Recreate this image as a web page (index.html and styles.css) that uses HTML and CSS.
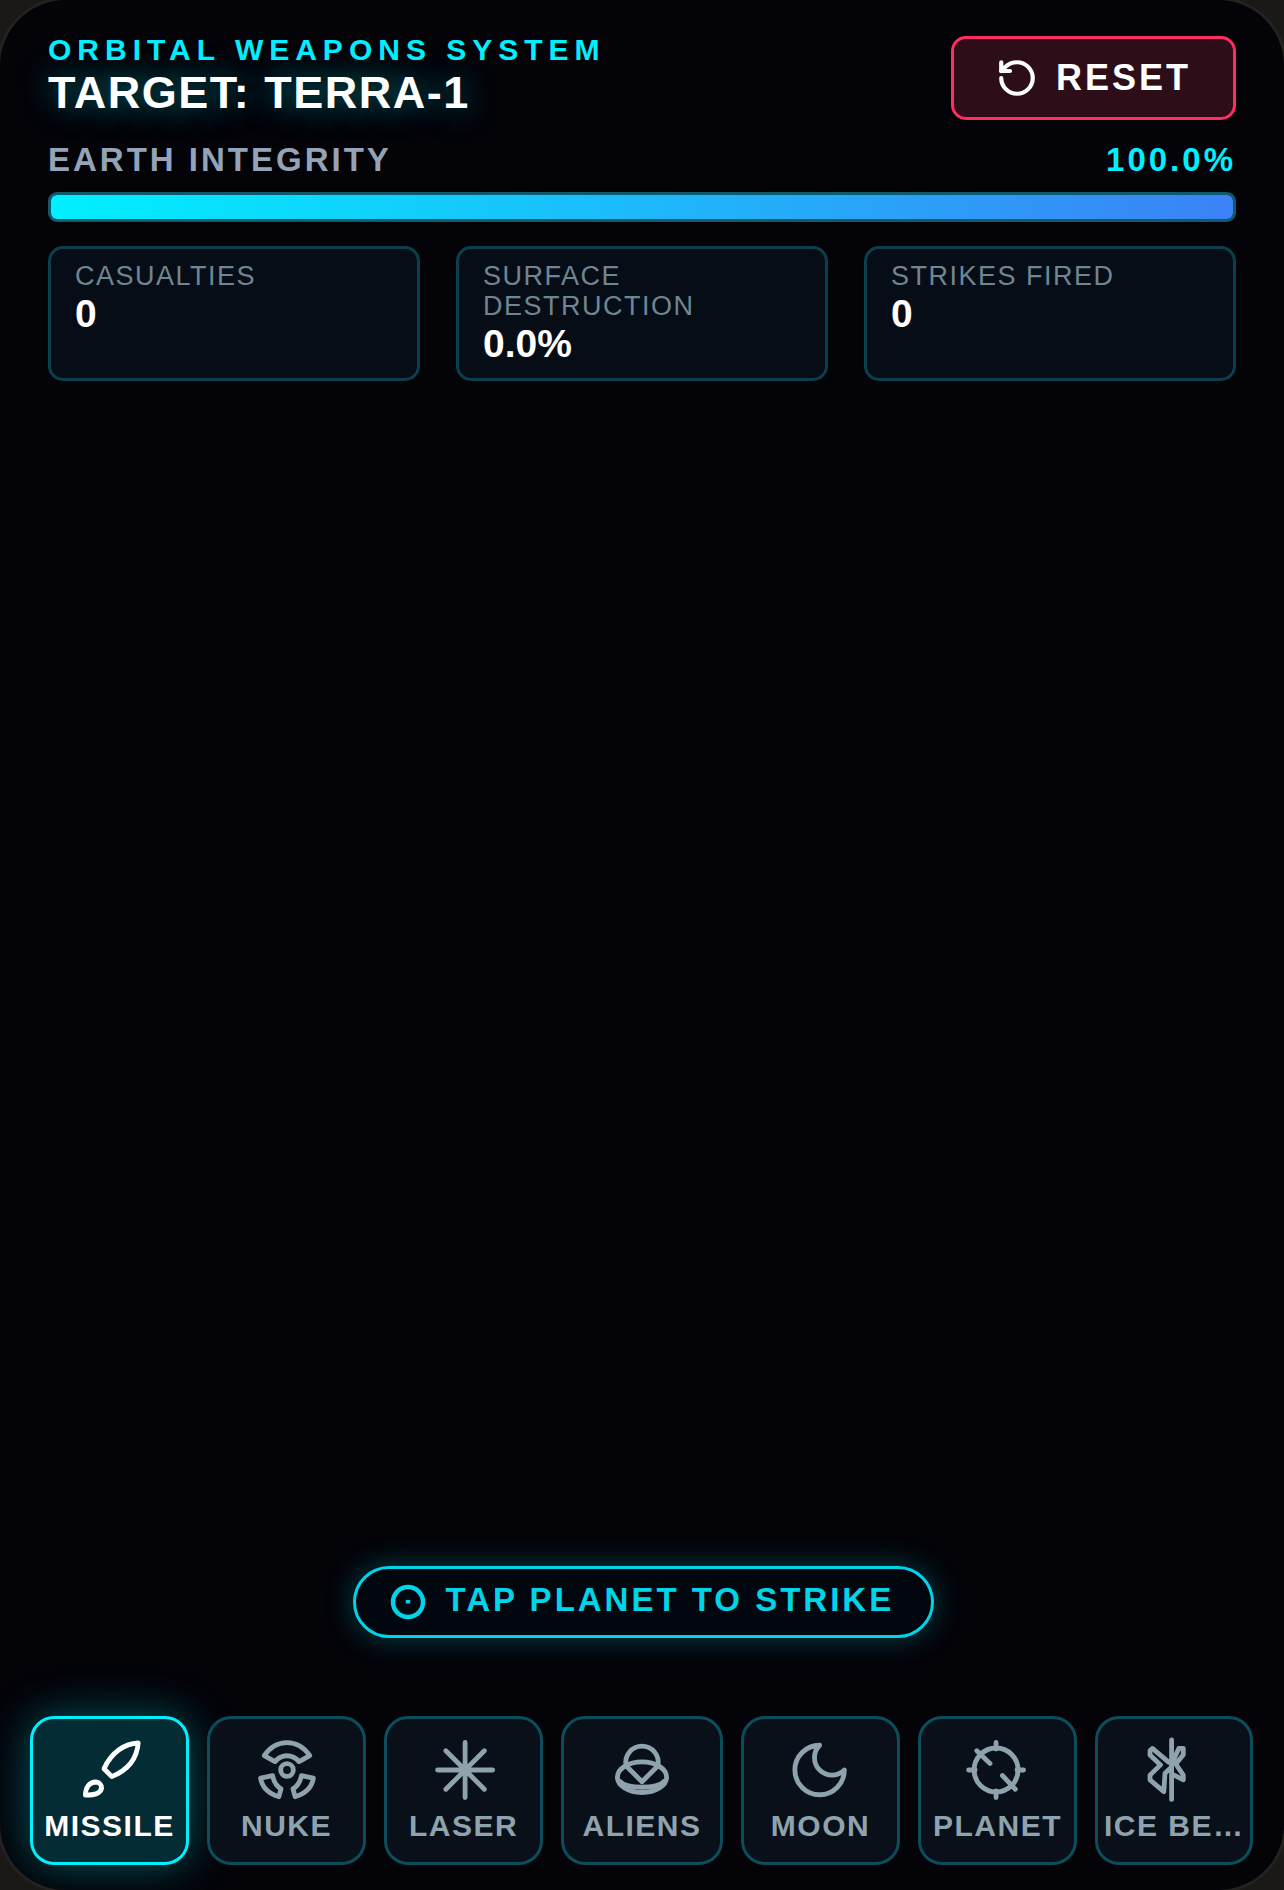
FILE: index.html
```html
<!DOCTYPE html>
<html lang="en">
<head>
  <meta charset="UTF-8">
  <title>Orbital Weapons System</title>
  <link rel="stylesheet" href="styles.css">
</head>
<body>
  <div class="screen">
    <header class="top">
      <div>
        <div class="eyebrow">ORBITAL WEAPONS SYSTEM</div>
        <h1 class="target">TARGET: TERRA-1</h1>
      </div>
      <button class="reset">
        <svg class="reset-icon" viewBox="0 0 24 24"><path d="M3 12a9 9 0 1 0 9-9 9.75 9.75 0 0 0-6.74 2.74L3 8"/><path d="M3 3v5h5"/></svg>
        RESET
      </button>
    </header>

    <div class="integrity">
      <span class="integrity-label">EARTH INTEGRITY</span>
      <span class="integrity-value">100.0%</span>
    </div>
    <div class="bar"><div class="bar-fill"></div></div>

    <div class="stats">
      <div class="stat">
        <div class="stat-label">CASUALTIES</div>
        <div class="stat-value">0</div>
      </div>
      <div class="stat">
        <div class="stat-label">SURFACE DESTRUCTION</div>
        <div class="stat-value">0.0%</div>
      </div>
      <div class="stat">
        <div class="stat-label">STRIKES FIRED</div>
        <div class="stat-value">0</div>
      </div>
    </div>

    <div class="stage">
      <div class="hint">
        <svg class="hint-icon" viewBox="0 0 24 24"><circle cx="12" cy="12" r="10"/><path d="M12 10.6v2.4"/></svg>
        <span class="hint-text">TAP PLANET TO STRIKE</span>
      </div>
    </div>

    <nav class="weapons">
      <button class="weapon active">
        <svg class="weapon-icon drawn" viewBox="1 1 22 22"><path d="M21.4 3C17 3.2 12.5 6 10 11.6l2.6 2.6C18 12 21 8 21.4 3Z"/><path d="M3.8 20.4C3.8 18 5 16 7.3 16c1.1.1 1.9.9 1.9 2-.3 1.8-2.4 2.4-5.4 2.4Z"/></svg>
        <span class="weapon-name">MISSILE</span>
      </button>
      <button class="weapon">
        <svg class="weapon-icon drawn" viewBox="1 1 22 22"><circle cx="12" cy="12" r="2.1"/><path d="M4.4 7.2C8.4 1.4 15.6 1.4 19.6 7.2L16 9.2c-2.2-2.6-5.8-2.6-8 0Z"/><path d="M3.2 14.7l4-.8c.4 2.1 1.5 3.6 2.8 4.4l-.7 2.6c-3.3-1-5.6-3.1-6.1-6.2Z"/><path d="M20.8 14.7l-4-.8c-.4 2.1-1.5 3.6-2.8 4.4l.7 2.6c3.3-1 5.6-3.1 6.1-6.2Z"/></svg>
        <span class="weapon-name">NUKE</span>
      </button>
      <button class="weapon">
        <svg class="weapon-icon" viewBox="-0.4 0 24 24"><path d="M12 2v20M2 12h20M5 5l14 14M19 5 5 19"/></svg>
        <span class="weapon-name">LASER</span>
      </button>
      <button class="weapon">
        <svg class="weapon-icon drawn" viewBox="1 1 22 22"><ellipse cx="12" cy="14.4" rx="8.2" ry="5.1"/><path d="M6.7 10.5a5.4 5.4 0 1 1 10.6 0"/><path d="M7 10.9l5 5 5-5"/><path d="M4.6 15.8c2.4 2.6 12.4 2.6 14.8 0"/></svg>
        <span class="weapon-name">ALIENS</span>
      </button>
      <button class="weapon">
        <svg class="weapon-icon" viewBox="0.5 0 24 24"><path d="M12 3a6 6 0 0 0 9 9 9 9 0 1 1-9-9Z"/></svg>
        <span class="weapon-name">MOON</span>
      </button>
      <button class="weapon">
        <svg class="weapon-icon" viewBox="0.7 0 24 24"><circle cx="12" cy="12" r="8"/><path d="M12 2v2.4M12 19.6V22M2 12h2.4M19.6 12H22M5 5l4.8 4.6M14.3 14l4.7 5"/></svg>
        <span class="weapon-name">PLANET</span>
      </button>
      <button class="weapon">
        <svg class="weapon-icon drawn" viewBox="1.8 1 22 22"><path d="M12 2v19.8"/><path d="M11 9.4 5.6 4.8l-.8.8V7l3.5 3.3-3.5 3.4v1.6l4.6 3.9.4-6.1L12 11"/><path d="M12 10l2.4-5.2h1.5v2.1L13.4 10l2.5 3.7v1.6l-3.1-1.6"/></svg>
        <span class="weapon-name">ICE BEAM</span>
      </button>
    </nav>
  </div>
</body>
</html>
```
FILE: styles.css
```css
* {
  box-sizing: border-box;
}
body {
  margin: 0;
  background: #1a1918;
  font-family: "Liberation Sans", Arial, sans-serif;
}
button {
  font-family: inherit;
}
.screen {
  width: 1284px;
  height: 1890px;
  background: #030308;
  border-radius: 66px;
  box-shadow: 0 0 0 3px #232221;
  overflow: hidden;
  padding: 36px 0 25px;
  display: flex;
  flex-direction: column;
}
.top {
  display: flex;
  justify-content: space-between;
  align-items: flex-start;
  padding: 0 48px;
  height: 99px;
}
.eyebrow {
  color: #00f0ff;
  font-size: 30px;
  font-weight: bold;
  letter-spacing: 6px;
  line-height: 27px;
}
.target {
  margin: 0;
  color: #fff;
  font-size: 45px;
  font-weight: bold;
  letter-spacing: 1.5px;
  line-height: 60px;
  text-shadow: 0 0 30px rgba(0, 240, 255, 0.5);
}
.reset {
  width: 285px;
  height: 84px;
  display: flex;
  align-items: center;
  justify-content: center;
  gap: 18px;
  background: #2d0d18;
  border: 3px solid #ff2d64;
  border-radius: 15px;
  color: #fff;
  font-size: 36px;
  font-weight: bold;
  letter-spacing: 3px;
}
.reset-icon {
  width: 42px;
  height: 42px;
  fill: none;
  stroke: #fff;
  stroke-width: 2.4;
  stroke-linecap: round;
  stroke-linejoin: round;
}
.integrity {
  display: flex;
  justify-content: space-between;
  align-items: center;
  padding: 0 48px;
  margin-top: 5px;
  height: 39px;
}
.integrity-label {
  color: #94a3b8;
  font-size: 33px;
  font-weight: bold;
  letter-spacing: 3px;
}
.integrity-value {
  color: #00f0ff;
  font-size: 33px;
  font-weight: bold;
  letter-spacing: 3px;
}
.bar {
  margin: 13px 48px 0;
  height: 30px;
  border: 3px solid #0e5b6d;
  border-radius: 9px;
  background: #0a1018;
  overflow: hidden;
}
.bar-fill {
  height: 100%;
  background: linear-gradient(90deg, #00f0ff, #3b82f6);
}
.stats {
  display: grid;
  grid-template-columns: repeat(3, 1fr);
  gap: 36px;
  padding: 0 48px;
  margin-top: 24px;
}
.stat {
  height: 135px;
  padding: 12px 24px;
  background: #070d16;
  border: 3px solid #0c3f4c;
  border-radius: 15px;
}
.stat-label {
  color: #6f8592;
  font-size: 27px;
  letter-spacing: 1.5px;
  line-height: 30px;
}
.stat-value {
  color: #fff;
  font-size: 39px;
  font-weight: bold;
  line-height: 45px;
}
.stage {
  flex: 1;
  display: flex;
  align-items: flex-end;
  justify-content: center;
  padding: 0 0 78px 2px;
}
.hint {
  width: 581px;
  height: 72px;
  padding-left: 34px;
  display: flex;
  align-items: center;
  gap: 20px;
  background: #02060e;
  border: 3px solid #00d4e8;
  border-radius: 36px;
  box-shadow: 0 0 30px rgba(0, 212, 232, 0.3);
  color: #00d4e8;
  font-size: 33px;
  font-weight: bold;
  letter-spacing: 3px;
}
.hint-text {
  padding-bottom: 5px;
}
.hint-icon {
  width: 36px;
  height: 36px;
  fill: none;
  stroke: #00d4e8;
  stroke-width: 3;
  stroke-linejoin: round;
}
.weapons {
  display: grid;
  grid-template-columns: repeat(3, 159px) 162px 159px 159px 158px;
  gap: 18px;
  padding: 0 30px;
}
.weapon {
  height: 149px;
  min-width: 0;
  padding: 18px 6px 0;
  display: flex;
  flex-direction: column;
  align-items: center;
  background: #0a101a;
  border: 3px solid #0c4d5c;
  border-radius: 24px;
  color: #8fa3af;
}
.weapon.active {
  background: #032c35;
  border-color: #00f0ff;
  box-shadow: 0 0 45px rgba(0, 240, 255, 0.35);
  color: #fff;
}
.weapon-icon {
  width: 66px;
  height: 66px;
  flex-shrink: 0;
  fill: none;
  stroke: currentColor;
  stroke-width: 1.75;
  stroke-linecap: round;
  stroke-linejoin: round;
}
.weapon-icon.drawn {
  stroke-width: 1.6;
}
.weapon-name {
  max-width: 100%;
  margin-top: 5px;
  font-size: 30px;
  font-weight: bold;
  letter-spacing: 1.5px;
  line-height: 36px;
  white-space: nowrap;
  overflow: hidden;
  text-overflow: ellipsis;
}
```
